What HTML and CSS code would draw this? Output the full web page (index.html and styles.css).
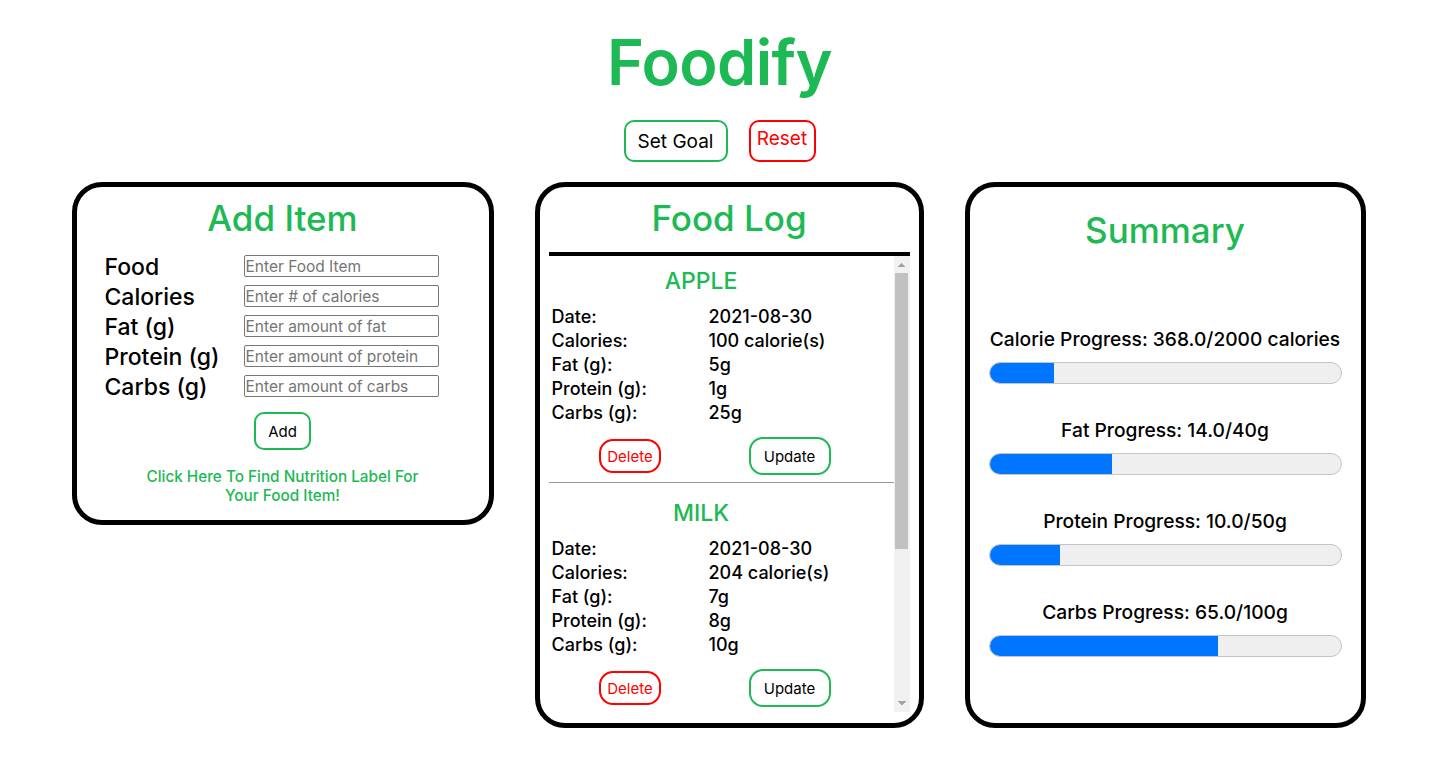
FILE: index.html
```html
<!DOCTYPE html>
<html lang="en">
<head>
  <meta charset="UTF-8" />
  <meta name="viewport" content="width=device-width, initial-scale=1.0"/>
  <title>Foodify</title>
  <link rel="stylesheet" href="styles.css">
</head>
<body>
  <h1 class="title">Foodify</h1>

  <div class="top-btns">
    <button class="btn btn-green goal-btn">Set Goal</button>
    <button class="btn btn-red reset-btn">Reset</button>
  </div>

  <div class="cards">
    <!-- add item -->
    <div class="card card-add">
      <h2 class="card-title">Add Item</h2>
      <div class="add-form">
        <label>Food</label>
        <input type="text" placeholder="Enter Food Item" />
        <label>Calories</label>
        <input type="text" placeholder="Enter # of calories" />
        <label>Fat (g)</label>
        <input type="text" placeholder="Enter amount of fat" />
        <label>Protein (g)</label>
        <input type="text" placeholder="Enter amount of protein" />
        <label>Carbs (g)</label>
        <input type="text" placeholder="Enter amount of carbs" />
      </div>
      <button class="btn btn-green add-btn">Add</button>
      <a class="label-link" href="#">Click Here To Find Nutrition Label For Your Food Item!</a>
    </div>

    <!-- food log -->
    <div class="card card-log">
      <h2 class="card-title">Food Log</h2>
      <div class="log-body">
        <div class="log-list">
          <div class="log-item">
            <div class="item-name">APPLE</div>
            <span>Date:</span><span>2021-08-30</span>
            <span>Calories:</span><span>100 calorie(s)</span>
            <span>Fat (g):</span><span>5g</span>
            <span>Protein (g):</span><span>1g</span>
            <span>Carbs (g):</span><span>25g</span>
            <div class="item-btn"><button class="btn btn-red del-btn">Delete</button></div>
            <div class="item-btn"><button class="btn btn-green upd-btn">Update</button></div>
          </div>
          <div class="log-item">
            <div class="item-name">MILK</div>
            <span>Date:</span><span>2021-08-30</span>
            <span>Calories:</span><span>204 calorie(s)</span>
            <span>Fat (g):</span><span>7g</span>
            <span>Protein (g):</span><span>8g</span>
            <span>Carbs (g):</span><span>10g</span>
            <div class="item-btn"><button class="btn btn-red del-btn">Delete</button></div>
            <div class="item-btn"><button class="btn btn-green upd-btn">Update</button></div>
          </div>
          <div class="log-item">
            <div class="item-name">BREAD</div>
            <span>Date:</span><span>2021-08-30</span>
            <span>Calories:</span><span>64 calorie(s)</span>
            <span>Fat (g):</span><span>2g</span>
            <span>Protein (g):</span><span>1g</span>
            <span>Carbs (g):</span><span>30g</span>
            <div class="item-btn"><button class="btn btn-red del-btn">Delete</button></div>
            <div class="item-btn"><button class="btn btn-green upd-btn">Update</button></div>
          </div>
        </div>
        <!-- scrollbar drawn by hand, the real one is hidden in the screenshot -->
        <div class="scrollbar">
          <div class="sb-arrow sb-up"></div>
          <div class="sb-thumb"></div>
          <div class="sb-space"></div>
          <div class="sb-arrow sb-down"></div>
        </div>
      </div>
    </div>

    <!-- summary -->
    <div class="card card-summary">
      <h2 class="card-title summary-title">Summary</h2>
      <div class="progress-block">
        <div class="progress-label">Calorie Progress: 368.0/2000 calories</div>
        <div class="bar"><div class="bar-fill" style="width: 18.4%"></div></div>
      </div>
      <div class="progress-block">
        <div class="progress-label">Fat Progress: 14.0/40g</div>
        <div class="bar"><div class="bar-fill" style="width: 35%"></div></div>
      </div>
      <div class="progress-block">
        <div class="progress-label">Protein Progress: 10.0/50g</div>
        <div class="bar"><div class="bar-fill" style="width: 20%"></div></div>
      </div>
      <div class="progress-block">
        <div class="progress-label">Carbs Progress: 65.0/100g</div>
        <div class="bar"><div class="bar-fill" style="width: 65%"></div></div>
      </div>
    </div>
  </div>
</body>
</html>
```

FILE: styles.css
```css
body {
  margin: 0;
  font-family: 'Inter', 'Noto Sans', sans-serif;
  background-color: white;
  color: black;
}

.title {
  margin: 22px 0 0 0;
  text-align: center;
  font-size: 63px;
  font-weight: 600;
  letter-spacing: -0.6px;
  line-height: 80px;
  color: #1db954;
}

.top-btns {
  display: flex;
  justify-content: center;
  gap: 21px;
  margin-top: 18px;
}

.btn {
  font-family: inherit;
  background-color: white;
  border: 2px solid #1db954;
  border-radius: 10px;
  cursor: pointer;
  color: black;
}

.btn-red {
  border-color: red;
  color: red;
}

.goal-btn {
  width: 104px;
  height: 42px;
  font-size: 19px;
  padding: 1px 0 0 0;
}

.reset-btn {
  width: 67px;
  height: 42px;
  font-size: 19px;
  padding: 0 0 6px 0;
}

.cards {
  display: flex;
  justify-content: center;
  align-items: flex-start;
  gap: 41px;
  margin-top: 20px;
  margin-left: -2px;
}

.card {
  border: 5px solid black;
  border-radius: 30px;
  box-sizing: border-box;
}

.card-title {
  margin: 0;
  text-align: center;
  font-size: 35px;
  font-weight: 500;
  color: #1db954;
  line-height: 44px;
}

/* add item */
.card-add {
  width: 422px;
  padding: 9px 0 15px 0;
  display: flex;
  flex-direction: column;
  align-items: center;
}

.add-form {
  display: grid;
  grid-template-columns: 139px 195px;
  grid-auto-rows: 30px;
  align-items: center;
  margin-top: 12px;
  margin-left: -22px;
}

.add-form label {
  font-size: 23px;
  font-weight: 500;
}

.add-form input {
  height: 22px;
  box-sizing: border-box;
  border: 1px solid #767676;
  border-radius: 2px;
  padding: 0 1px;
  font-family: inherit;
  font-size: 15.5px;
  margin-top: -2px;
}

.add-form input::placeholder {
  color: #757575;
}

.add-btn {
  margin-top: 10px;
  width: 57px;
  height: 38px;
  font-size: 15px;
}

.label-link {
  margin-top: 17px;
  width: 300px;
  text-align: center;
  font-size: 15.3px;
  font-weight: 500;
  line-height: 19px;
  color: #1db954;
  text-decoration: none;
}

/* food log */
.card-log {
  width: 389px;
  height: 546px;
  padding: 9px 9px 10px 9px;
  display: flex;
  flex-direction: column;
}

.log-body {
  margin-top: 12px;
  border-top: 4px solid black;
  height: 456px;
  display: flex;
}

.log-list {
  flex: 1;
  overflow: hidden;
}

.scrollbar {
  width: 16px;
  background-color: #f1f1f1;
  display: flex;
  flex-direction: column;
  align-items: center;
}

.sb-arrow {
  width: 16px;
  height: 17px;
  background-repeat: no-repeat;
  background-size: 4px 4px;
}

/* little triangles built from two half squares */
.sb-up {
  background-image: linear-gradient(to bottom right, transparent 50%, #a3a3a3 50%),
                    linear-gradient(to bottom left, transparent 50%, #a3a3a3 50%);
  background-position: 4px 7px, 8px 7px;
}

.sb-down {
  background-image: linear-gradient(to top right, transparent 50%, #a3a3a3 50%),
                    linear-gradient(to top left, transparent 50%, #a3a3a3 50%);
  background-position: 4px 6px, 8px 6px;
}

.sb-thumb {
  width: 13px;
  height: 276px;
  margin-left: -1px;
  background-color: #c1c1c1;
}

.sb-space {
  flex: 1;
}

.log-item {
  display: grid;
  grid-template-columns: 157px 162px;
  align-items: center;
  padding: 12px 0 7px 3px;
  border-bottom: 1px solid #999;
  font-size: 18px;
  font-weight: 500;
  line-height: 24px;
}

.log-item:first-child {
  padding-top: 7px;
}

.item-name {
  grid-column: 1 / 3;
  line-height: 36px;
  margin-bottom: 6px;
  padding-right: 20px;
  text-align: center;
  font-size: 23px;
  font-weight: 500;
  color: #1db954;
}

.item-btn {
  margin-top: 12px;
  height: 38px;
  display: flex;
  align-items: center;
  justify-content: center;
}

.del-btn {
  width: 62px;
  height: 34px;
  border-radius: 14px;
  font-size: 15px;
}

.upd-btn {
  width: 82px;
  height: 38px;
  border-radius: 14px;
  font-size: 15px;
}

/* summary */
.card-summary {
  width: 401px;
  height: 546px;
  padding: 21px 19px 0 19px;
}

.summary-title {
  margin-bottom: 75px;
}

.progress-block {
  margin-bottom: 34px;
}

.progress-label {
  text-align: center;
  font-size: 19.2px;
  font-weight: 500;
  line-height: 24px;
  margin-bottom: 11px;
}

.bar {
  height: 22px;
  box-sizing: border-box;
  background-color: #efefef;
  border: 1px solid #c4c4c4;
  border-radius: 11px;
  overflow: hidden;
}

.bar-fill {
  height: 100%;
  background-color: #0075ff;
}
```
